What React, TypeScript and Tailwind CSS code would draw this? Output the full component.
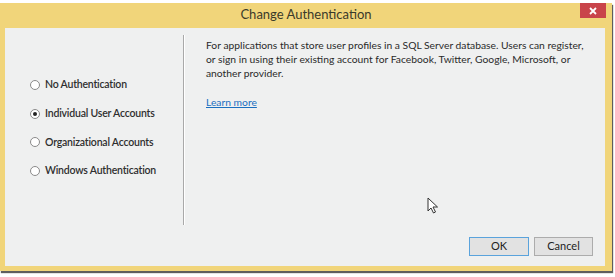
const options = [
  { label: "No Authentication", checked: false },
  { label: "Individual User Accounts", checked: true },
  { label: "Organizational Accounts", checked: false },
  { label: "Windows Authentication", checked: false },
];

function Radio({ checked }: { checked: boolean }) {
  return (
    <span className="w-[10px] h-[10px] rounded-full border border-[#8a8a8a] bg-white flex items-center justify-center shrink-0">
      {checked && <span className="w-[4px] h-[4px] rounded-full bg-[#222]" />}
    </span>
  );
}

export default function App() {
  return (
    <div className="w-[615px] h-[277px] bg-white overflow-hidden font-['Lato',sans-serif]">
      <div className="mt-[3px] w-[612px] h-[268px] bg-[#f1d57a] shadow-[1px_2px_1px_rgba(40,40,40,0.75)] flex flex-col">
        {/* title bar */}
        <div className="h-[25px] relative flex items-center justify-center">
          <span className="text-[13px] text-[#3a3a2a] mt-[-1px]">Change Authentication</span>
          <div className="absolute right-[6px] top-0 w-[26px] h-[15px] bg-[#c9444a] flex items-center justify-center">
            <svg width="8" height="8" viewBox="0 0 8 8" stroke="white" strokeWidth="1.8">
              <path d="M1 1l6 6M7 1L1 7" />
            </svg>
          </div>
        </div>

        {/* client area */}
        <div className="ml-[5px] mr-[7px] h-[238px] bg-[#eff0f0] flex flex-col">
          <div className="flex h-[197px] pt-[7px]">
            <div className="w-[178px] flex flex-col gap-[12.7px] pl-[25px] pt-[42px]">
              {options.map((o) => (
                <div key={o.label} className="flex items-center gap-[5px] h-[16px]">
                  <Radio checked={o.checked} />
                  <span className="text-[10.5px] text-[#2e2e2e] font-semibold tracking-[-0.2px] whitespace-nowrap">{o.label}</span>
                </div>
              ))}
            </div>
            <div className="w-[1px] bg-[#a9a9a9] border-r border-white box-content" />
            <div className="flex-1 pl-[21px] pt-[3px] pr-[10px]">
              <p className="text-[10.3px] leading-[14px] text-[#2a2a2a] whitespace-nowrap">
                For applications that store user profiles in a SQL Server database. Users can register,
                <br />
                or sign in using their existing account for Facebook, Twitter, Google, Microsoft, or
                <br />
                another provider.
              </p>
              <a className="block mt-[15px] text-[10.3px] leading-[14px] text-[#1a6fc0] underline">Learn more</a>
            </div>
          </div>
          <div className="relative flex-1 flex justify-end items-start gap-[5px] pr-[12px] pt-[12px]">
            <svg className="absolute left-[422px] top-[-28px]" width="12" height="17" viewBox="0 0 12 17">
              <path d="M1 1v13l3-3 2.5 5 2-1-2.5-5h4.5z" fill="white" stroke="#333" strokeWidth="1" />
            </svg>
            <button className="w-[60px] h-[19px] bg-[#e2e2e2] border border-[#5aa3dc] text-[11px] text-[#222]">OK</button>
            <button className="w-[59px] h-[19px] bg-[#e2e2e2] border border-[#acacac] text-[11px] text-[#222]">Cancel</button>
          </div>
        </div>
      </div>
    </div>
  );
}
